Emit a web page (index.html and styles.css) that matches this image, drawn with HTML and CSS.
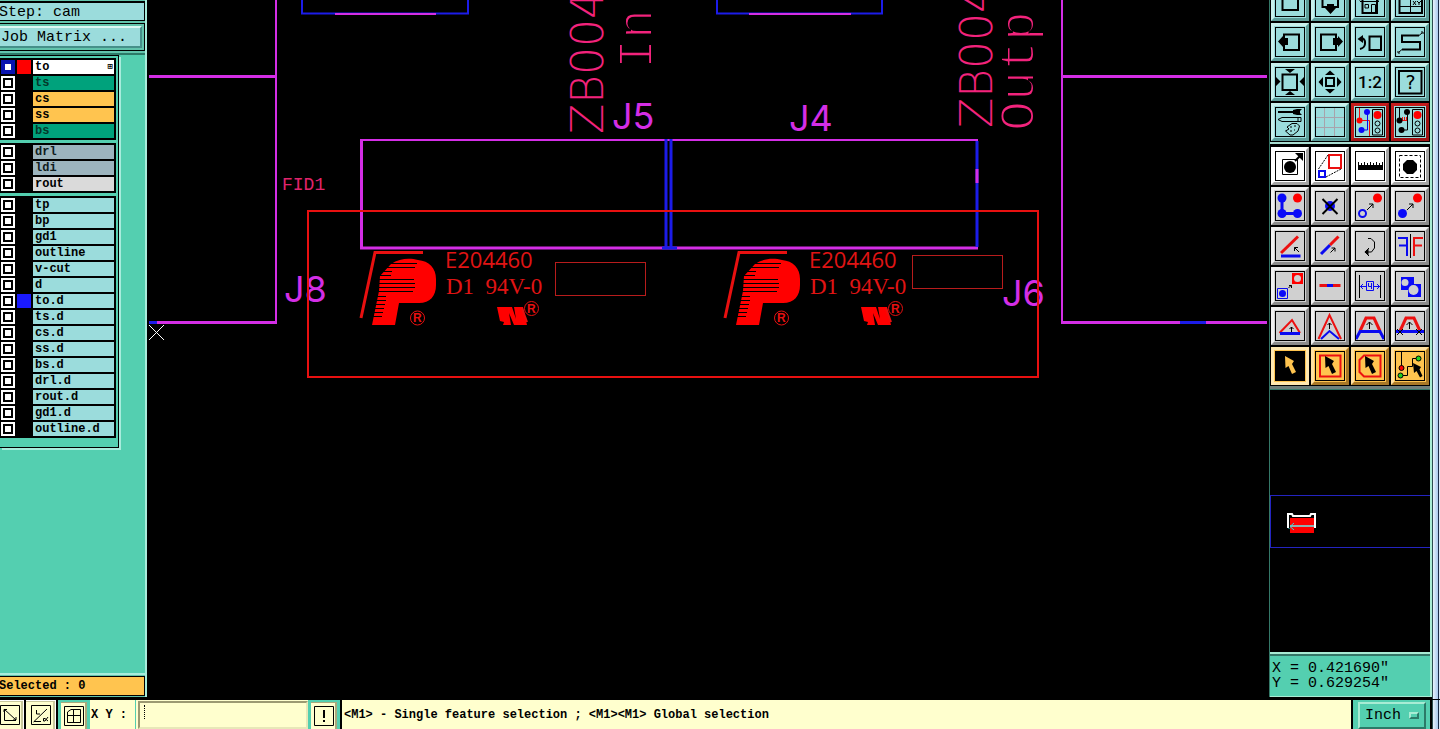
FILE: index.html
```html
<!DOCTYPE html>
<html lang="en">
<head>
<meta charset="utf-8">
<title>Graphic Editor</title>
<link rel="stylesheet" href="styles.css">
</head>
<body>
<div class="app">
<div class="work">
<aside class="side">
  <div class="job">
    <div class="step">Step: cam</div>
    <div class="matrix-frame"><button class="matrix" type="button">Job Matrix ...</button></div>
  </div>
  <div class="layers">
    <div class="group">
      <label class="layer white on"><input type="checkbox"><i class="swatch red"></i><span>to</span><b class="mark">⊞</b></label>
      <label class="layer green"><input type="checkbox"><i class="swatch"></i><span>ts</span></label>
      <label class="layer orange"><input type="checkbox"><i class="swatch"></i><span>cs</span></label>
      <label class="layer orange"><input type="checkbox"><i class="swatch"></i><span>ss</span></label>
      <label class="layer green"><input type="checkbox"><i class="swatch"></i><span>bs</span></label>
    </div>
    <div class="group">
      <label class="layer slate"><input type="checkbox"><i class="swatch"></i><span>drl</span></label>
      <label class="layer slate"><input type="checkbox"><i class="swatch"></i><span>ldi</span></label>
      <label class="layer grey"><input type="checkbox"><i class="swatch"></i><span>rout</span></label>
    </div>
    <div class="group">
      <label class="layer"><input type="checkbox"><i class="swatch"></i><span>tp</span></label>
      <label class="layer"><input type="checkbox"><i class="swatch"></i><span>bp</span></label>
      <label class="layer"><input type="checkbox"><i class="swatch"></i><span>gd1</span></label>
      <label class="layer"><input type="checkbox"><i class="swatch"></i><span>outline</span></label>
      <label class="layer"><input type="checkbox"><i class="swatch"></i><span>v-cut</span></label>
      <label class="layer"><input type="checkbox"><i class="swatch"></i><span>d</span></label>
      <label class="layer"><input type="checkbox"><i class="swatch blue"></i><span>to.d</span></label>
      <label class="layer"><input type="checkbox"><i class="swatch"></i><span>ts.d</span></label>
      <label class="layer"><input type="checkbox"><i class="swatch"></i><span>cs.d</span></label>
      <label class="layer"><input type="checkbox"><i class="swatch"></i><span>ss.d</span></label>
      <label class="layer"><input type="checkbox"><i class="swatch"></i><span>bs.d</span></label>
      <label class="layer"><input type="checkbox"><i class="swatch"></i><span>drl.d</span></label>
      <label class="layer"><input type="checkbox"><i class="swatch"></i><span>rout.d</span></label>
      <label class="layer"><input type="checkbox"><i class="swatch"></i><span>gd1.d</span></label>
      <label class="layer"><input type="checkbox"><i class="swatch"></i><span>outline.d</span></label>
    </div>
  </div>
  <div class="selected-frame"><div class="selected">Selected : 0</div></div>
</aside>

<main class="canvas">
<svg class="board" viewBox="147 0 1122 699" preserveAspectRatio="xMinYMin slice">
  <defs>
    <g id="mark">
      <path class="r-line3" d="M361 318L375 252.500H423"/>
      <path class="r-fill" d="M372 325L379 291L380 276L391 264C400 258 410 258 418 260C429 261 436 268 436 279V285C436 296 430 303 419 303H399L395 325Z"/>
      <path class="cut" d="M390 263.500H417M386 267.500H415M380 271.500H392M378 275.500H391M376 279.500H414M376 283.500H415M376 287.500H415M376 291.500H413M376 296.500H386M376 300.500H386M372 304.500H385M372 308.500H384M370 312.500H383M370 316.500H382"/>
      <circle class="r-line" cx="417.500" cy="318" r="7"/>
      <text class="reg" x="413" y="322">R</text>
      <path class="r-fill" d="M497 307H512L516 319L514 307H522L524 313L525 319L520 307H523L527 325H514L509 313L511 325H503L504 322L500 321Z"/>
      <path class="r-line2" d="M522 308L527 322"/>
      <circle class="r-line" cx="531.500" cy="308.500" r="7"/>
      <text class="reg" x="527" y="313">R</text>
      <text class="ul" x="445" y="268">E204460</text>
      <text class="ul-serif" x="446" y="294" xml:space="preserve">D1  94V-0</text>
    </g>
  </defs>
  <g class="m3"><path d="M149 76.500H276M149 322.500H276M1062 76.500H1267M1062 322.500H1267M361.500 139V249M360 248H978"/></g>
  <g class="m2"><path d="M276 0V324M1062 0V324M361 140H978"/></g>
  <g class="b2"><path d="M302 0V14M468 0V14M301 13.500H469M717 0V14M882 0V14M716 13.500H883"/></g>
  <g class="b3"><path d="M149 322.500H157M1180 322.500H1206M666 139V249M671 139V249M662 248H677M977 141V247"/></g>
  <path class="m2" d="M335 14H436M749 14H851"/>
  <path class="m3" d="M977 169V183"/>
  <path class="gap" d="M668.500 142V246"/>
  <path class="cross" d="M149 325L164 340M164 325L149 340"/>

  <text class="thin" transform="translate(603 134) rotate(-90)">ZB004</text>
  <text class="mono" transform="translate(652 69) rotate(-90)">In</text>
  <text class="thin" transform="translate(992 128) rotate(-90)">ZB004</text>
  <text class="mono" transform="translate(1034 131) rotate(-90)">Outp</text>
  <text class="fid" x="282" y="190">FID1</text>
  <text class="ref" x="612" y="129">J5</text>
  <text class="ref" x="789" y="131">J4</text>
  <text class="ref" x="284" y="302">J8</text>
  <text class="ref" x="1002" y="306">J6</text>

  <use href="#mark"/>
  <use href="#mark" x="364"/>
  <rect class="r-thin" x="555.500" y="262.500" width="90" height="33"/>
  <rect class="r-thin" x="912.500" y="255.500" width="90" height="33"/>
  <rect class="r-line2" x="308" y="211" width="730" height="166"/>
</svg>
</main>

<aside class="tools">
  <div class="palette view">
    <button type="button" class="t" aria-label="Zoom window"><svg viewBox="0 0 30 30"><path class="k2" d="M7.500 7H23V23H7.500Z"/></svg></button>
    <button type="button" class="t" aria-label="Pan down"><svg viewBox="0 0 30 30"><path class="k2" d="M7.500 5H23V20H7.500Z"/><path d="M12 17H19V21H21L15.500 27L10 21H12Z"/></svg></button>
    <button type="button" class="t" aria-label="Home"><svg viewBox="0 0 30 30"><path class="k2" d="M4 13L14 5L24 13M7.500 13V26H22V13"/><path class="k1" d="M5 14.500H24M10 17.500H13.500V21H10ZM16.500 26V17.500H20.500V26"/></svg></button>
    <button type="button" class="t" aria-label="XY view"><svg viewBox="0 0 30 30"><path class="k2" d="M4.500 4H27V26H4.500Z"/><path class="k1" d="M5 19.500H26M15.500 4V26M18 14L21 18M21 14L18 18M22 14L24 16L26 14M24 16V18"/></svg></button>

    <button type="button" class="t" aria-label="Pan left"><svg viewBox="0 0 30 30"><path class="k2" d="M9 7.500H24V23H9Z"/><path d="M3 14.500L8 9V11H13V18H8V20Z"/></svg></button>
    <button type="button" class="t" aria-label="Pan right"><svg viewBox="0 0 30 30"><path class="k2" d="M6 7.500H21V23H6Z"/><path d="M28 14.500L23 9V11H18V18H23V20Z"/></svg></button>
    <button type="button" class="t" aria-label="Previous view"><svg viewBox="0 0 30 30"><path class="k2" d="M14.500 9.500H26V23H14.500ZM5 11.500H8Q10.500 13 10 17T5 22"/><path d="M2.500 12L8 8V16Z"/></svg></button>
    <button type="button" class="t" aria-label="Serpentine"><svg viewBox="0 0 30 30"><path class="k2" d="M24 8.500H7V15H25V22.500H7"/><path class="k1" d="M24 8.500L27 6M27 6V4M27 6H29M7 22.500L4 25M4 25V27M4 25H2"/></svg></button>

    <button type="button" class="t" aria-label="Zoom out"><svg viewBox="0 0 30 30"><path class="k2" d="M7.500 7.500H22V23H7.500Z"/><path d="M10 2H20L15 6ZM10 28H20L15 24ZM1 10V19L5.500 14.500ZM29 10V19L24.500 14.500Z"/></svg></button>
    <button type="button" class="t" aria-label="Zoom in"><svg viewBox="0 0 30 30"><path class="k2" d="M11 11H19V19H11Z"/><path d="M10 8H20L15 3.500ZM10 22H20L15 26.500ZM8 10V20L3.500 15ZM22 10V20L26.500 15Z"/></svg></button>
    <button type="button" class="t" aria-label="Scale one to two"><svg viewBox="0 0 30 30"><text class="scale" x="15" y="21">1:2</text></svg></button>
    <button type="button" class="t" aria-label="Help"><svg viewBox="0 0 30 30"><path class="k2" d="M4 4H26.500V26.500H4Z"/><text class="help" x="15.500" y="22">?</text></svg></button>

    <button type="button" class="t" aria-label="Setup"><svg viewBox="0 0 30 30"><path d="M3 4H18V3L22 2H27L25 4V6L27 8H22L18 7V6H3Z"/><path class="k1" d="M3 12.500L7 10.500H26V14.500H7ZM23 10V15M12 20L17 16.500H22L24.500 19L23 24L18 28H15L10.500 24L14 22Z"/><path class="k1" d="M15 20H17M19 19H21M15 24H17M19 23H20"/></svg></button>
    <button type="button" class="t" aria-label="Grid"><svg viewBox="0 0 30 30"><path class="gridline" d="M9.500 1V29M19.500 1V29M1 10.500H29M1 20.500H29"/></svg></button>
    <button type="button" class="t alert" aria-label="Net check"><svg viewBox="0 0 30 30"><path class="r1" d="M4.500 1V13.500H14.500V29"/><path class="bl1" d="M12.500 5V23H6.500"/><circle class="bf" cx="12" cy="5" r="3"/><circle class="rf" cx="4.500" cy="13.500" r="3"/><circle class="bf" cx="6.500" cy="23" r="3"/><path class="k1" d="M17.500 2.500H27.500V28H17.500Z"/><circle class="rf" cx="22.500" cy="8" r="4"/><circle class="k1" cx="22.500" cy="16.500" r="2.500"/><circle class="k1" cx="22.500" cy="23.500" r="2.500"/></svg></button>
    <button type="button" class="t alert" aria-label="Spacing check"><svg viewBox="0 0 30 30"><path class="k1" d="M4.500 1V13.500M12.500 5V23H6.500"/><path class="r1" d="M5 13.500H12M7.500 10V13M9.500 10V13M11.500 10V13"/><circle cx="12" cy="5" r="3"/><circle cx="4.500" cy="13.500" r="3"/><circle cx="6.500" cy="23" r="3"/><path class="k1" d="M17.500 2.500H27.500V28H17.500Z"/><circle class="rf" cx="22.500" cy="8" r="4"/><circle class="k1" cx="22.500" cy="16.500" r="2.500"/><circle class="k1" cx="22.500" cy="23.500" r="2.500"/></svg></button>
  </div>

  <div class="palette edit">
    <button type="button" class="t w" aria-label="Pad properties"><svg viewBox="0 0 30 30"><path class="k1" d="M7.500 8.500H22.500V23.500H7.500Z"/><circle cx="15" cy="16" r="6"/><path class="k2" d="M20 10L26 4"/><path d="M20 2H28V10Z"/></svg></button>
    <button type="button" class="t w" aria-label="Resize"><svg viewBox="0 0 30 30"><path class="k2 red" d="M14 4H26V17H14Z"/><path class="k2 blue" d="M4 20H10V26H4Z"/><path class="k1 dots" d="M3.500 18L13 4M11 26L26 18"/></svg></button>
    <button type="button" class="t w" aria-label="Measure"><svg viewBox="0 0 30 30"><path d="M3 14H28V19H3Z"/><path class="k1" d="M3.500 11V15M6.500 12V15M9.500 11V15M12.500 12V15M15.500 11V15M18.500 12V15M21.500 11V15M24.500 12V15M27.500 11V15"/></svg></button>
    <button type="button" class="t w" aria-label="Select area"><svg viewBox="0 0 30 30"><path class="k1 dash" d="M4.500 4.500H25.500V26.500H4.500Z"/><path d="M12 9H18L22 13V19L18 23H12L8 19V13Z"/></svg></button>

    <button type="button" class="t g" aria-label="Copy chain"><svg viewBox="0 0 30 30"><path class="bl2" d="M7 7V22.500H22.500"/><circle class="bf" cx="7" cy="7" r="4.500"/><circle class="bf" cx="7" cy="22.500" r="4.500"/><circle class="bf" cx="22.500" cy="22.500" r="4.500"/><circle class="rf" cx="22.500" cy="7" r="4.500"/></svg></button>
    <button type="button" class="t g" aria-label="Delete"><svg viewBox="0 0 30 30"><circle class="bf" cx="15" cy="15" r="5"/><path class="k2" d="M7.500 8L22.500 23M22.500 8L7.500 23"/></svg></button>
    <button type="button" class="t g" aria-label="Move"><svg viewBox="0 0 30 30"><circle class="k2 blue" cx="7.500" cy="22.500" r="3.500"/><circle class="rf" cx="22.500" cy="7" r="4.500"/><path class="k1" d="M12 19L18 13M14 13H18V17"/></svg></button>
    <button type="button" class="t g" aria-label="Copy"><svg viewBox="0 0 30 30"><circle class="bf" cx="7.500" cy="22.500" r="4.500"/><circle class="rf" cx="22.500" cy="7" r="4.500"/><path class="k1" d="M12 19L18 13M14 13H18V17"/></svg></button>

    <button type="button" class="t g" aria-label="Change angle"><svg viewBox="0 0 30 30"><path class="r2" d="M6 22L23 5.500"/><path class="bl2" d="M6 25H25.500"/><path class="k1" d="M24 21L19.500 16.500M19.500 20V16.500H23"/></svg></button>
    <button type="button" class="t g" aria-label="Extend line"><svg viewBox="0 0 30 30"><path class="bl2" d="M6 23L15 14"/><path class="r2" d="M15 14L23.500 5.500"/><path class="k1" d="M15.500 21.500L20 17M16.500 17H20V20.500"/></svg></button>
    <button type="button" class="t g" aria-label="Rotate"><svg viewBox="0 0 30 30"><path class="k1" d="M13 7.500H16L19.500 11V17L16.500 21H10M14 17L10 21L14 25"/><path d="M9.500 21L13.500 17.500V24.500Z"/></svg></button>
    <button type="button" class="t g" aria-label="Mirror"><svg viewBox="0 0 30 30"><path class="k2 blue" d="M3 7H12V25M4 14.500H12"/><path class="k2 red" d="M28 7H19V25M19 14.500H27"/><path class="k1" d="M15.500 3V27"/></svg></button>

    <button type="button" class="t g" aria-label="Replace"><svg viewBox="0 0 30 30"><path class="rf" d="M17 2H28V13H17Z"/><circle class="gf" cx="22.500" cy="7.500" r="3.500"/><path class="bl1" d="M2.500 17.500H12.500V27.500H2.500Z"/><circle class="bf" cx="7.500" cy="22.500" r="3.500"/><path class="k1" d="M13.500 17L16.500 14M14 14.500H16.500V17"/></svg></button>
    <button type="button" class="t g" aria-label="Merge line"><svg viewBox="0 0 30 30"><path class="r2" d="M4.500 14.500H25.500"/><path class="bl2" d="M12 14.500H18"/></svg></button>
    <button type="button" class="t g" aria-label="Spacing"><svg viewBox="0 0 30 30"><path class="k1" d="M4.500 4V27M25.500 4V27"/><path class="bl1" d="M11.500 10.500H18.500V19.500H11.500ZM13.500 12V15.500H17M16.500 12V18M5 15.500H11M8 13L5.500 15.500L8 18M19 15.500H25M22 13L24.500 15.500L22 18"/></svg></button>
    <button type="button" class="t g" aria-label="Surface merge"><svg viewBox="0 0 30 30"><path class="bf" d="M6 6H19V13H26V26H13V19H6Z"/><circle class="gf" cx="10" cy="11.500" r="3.500"/><circle class="gf" cx="18.500" cy="19" r="5"/></svg></button>

    <button type="button" class="t g" aria-label="Move corner"><svg viewBox="0 0 30 30"><path class="k2 red" d="M4.500 22L17 9L25 22"/><path class="bl2" d="M5 22.500H25"/><path class="k1" d="M16.500 21V16M14.500 18L16.500 16L18.500 18"/></svg></button>
    <button type="button" class="t g" aria-label="Stretch corner"><svg viewBox="0 0 30 30"><path class="k2 red" d="M3.500 28L14.500 4L26 28"/><path class="k2 blue" d="M6 28L14.500 20L24 28"/><path class="k1" d="M14.500 18V12M12.500 14L14.500 12L16.500 14"/></svg></button>
    <button type="button" class="t g" aria-label="Stretch side"><svg viewBox="0 0 30 30"><path class="r2" d="M5 20L11 7H19L25 20"/><path class="bl2" d="M1 28L5 20.500H25L29 28"/><path class="k1" d="M14.500 18V11M11.500 14L14.500 11L17.500 14"/></svg></button>
    <button type="button" class="t g" aria-label="Cut side"><svg viewBox="0 0 30 30"><path class="r2" d="M5 20L11 7H19L25 20"/><path class="bl2" d="M0 20.500H30"/><path class="k1" d="M14.500 18V11M11.500 14L14.500 11L17.500 14M2 18L8 24M8 18L2 24M21 18L27 24M27 18L21 24"/></svg></button>

    <button type="button" class="t o pressed" aria-label="Select"><svg viewBox="0 0 30 30"><path d="M0 0H30V30H0Z"/><path class="of" d="M10 5L19 10L17 13L21 21L17 23L13.500 15L10.500 17Z"/></svg></button>
    <button type="button" class="t o" aria-label="Select in frame"><svg viewBox="0 0 30 30"><path class="k2 red" d="M5 4.500H25.500V25.500H5Z"/><path d="M10 5L19 10L17 13L21 21L17 23L13.500 15L10.500 17Z"/></svg></button>
    <button type="button" class="t o" aria-label="Select in polygon"><svg viewBox="0 0 30 30"><path class="k2 red" d="M9 4.500H25.500V25.500H9L4.500 21V9Z"/><path d="M10 5L19 10L17 13L21 21L17 23L13.500 15L10.500 17Z"/></svg></button>
    <button type="button" class="t o" aria-label="Select net"><svg viewBox="0 0 30 30"><path class="k1" d="M6.500 1V16M6 24.500H12.500V15.500H17.500V7.500H23"/><circle class="dot rf" cx="6.500" cy="17" r="2.500"/><circle class="dot lime" cx="5.500" cy="24.500" r="2.500"/><circle class="dot lime" cx="23.500" cy="7.500" r="2.500"/><path d="M18 12L26 16L24.500 18.500L27.500 25L25 26.500L21.500 20L19 22Z"/></svg></button>
  </div>

  <div class="overview">
    <div class="extent">
      <svg class="mini" viewBox="0 0 30 22"><path class="rf" d="M3 6H27V21H3Z"/><path class="wl" d="M1 16V2H5L6 4H23L24 2H28V16"/><path class="cy" d="M3 14H27"/><path class="cz" d="M7 11L3 14.500L7 18M2 17V16"/></svg>
    </div>
  </div>
  <div class="coords">X = 0.421690"<br>Y = 0.629254"</div>
</aside>
<div class="edge"></div>
</div>

<footer class="status">
  <button type="button" class="s" aria-label="Diagonal mode"><svg viewBox="0 0 20 20"><path class="k1" d="M.5 .5H19.500V19.500H.5ZM4.500 4V15.500H16M4 4L16 15M4 7V4.500H7M16 12V15H13"/></svg></button>
  <button type="button" class="s" aria-label="Angle mode"><svg viewBox="0 0 20 20"><path class="k1" d="M.5 .5H19.500V19.500H.5ZM2.500 17L16 4M5.500 5V9H9M3 16.500H10"/><path class="k1" d="M17 12L14 16H12.500V13.500H14L17 16"/></svg></button>
  <button type="button" class="s active" aria-label="Snap grid"><svg viewBox="0 0 20 20"><path class="k1" d="M.5 .5H19.500V19.500H.5ZM3.500 16.500V6L7 3.500H16.500V16.500ZM9.500 3.500V16.500M3.500 9.500H16.500M3.500 16.500H16.500"/></svg></button>
  <label class="xy" for="xy">X Y :</label>
  <div class="field-frame"><input id="xy" class="field" type="text"><i class="caret"></i></div>
  <button type="button" class="s active" aria-label="Messages"><svg viewBox="0 0 20 20"><path class="k1" d="M.5 .5H19.500V19.500H.5Z"/><path d="M9 4H11V12H9ZM9 14H11V16H9Z"/></svg></button>
  <output class="msg">&lt;M1&gt; - Single feature selection ; &lt;M1&gt;&lt;M1&gt; Global selection</output>
  <div class="unit-frame"><button type="button" class="unit">Inch<i></i></button></div>
  <div class="edge"></div>
</footer>
</div>
</body>
</html>
```
FILE: styles.css
```css
* { box-sizing: border-box; }
body {
  margin: 0;
  background: #000;
  color: #000;
  font-family: "Liberation Mono", monospace;
  font-size: 15px;
}
button { font: inherit; color: inherit; margin: 0; }
.app { display: flex; flex-direction: column; min-height: 100vh; }
.work { display: flex; flex: 1; }

/* left side */
.side {
  width: 147px;
  flex: none;
  display: flex;
  flex-direction: column;
  background: #54cfb0;
  border-right: 2px solid #a8ecdc;
  margin-bottom: 2px;
}
.job { padding-top: 1px; border-bottom: 2px solid #2c7a68; background: #62c4ac; }
.step {
  height: 20px;
  line-height: 19px;
  background: #9bdcdc;
  border: 1px solid #000;
  border-top-width: 2px;
  border-left: 0;
  text-indent: -1px;
}
.matrix-frame { margin: 2px 0; padding: 2px 2px 2px 0; border: 1px solid #000; border-left: 0; }
.matrix {
  display: block;
  width: 100%;
  height: 22px;
  padding: 0 0 0 1px;
  text-align: left;
  line-height: 20px;
  background: #9bdcdc;
  border: 2px solid;
  border-color: #dcf8f4 #46908a #46908a #9bdcdc;
  border-left-width: 0;
}
.layers {
  margin-right: 26px;
  padding: 2px 2px 9px 0;
  border: 1px solid #000;
  border-left: 0;
  box-shadow: 2px 2px 0 #a8ecdc;
  display: flex;
  flex-direction: column;
  gap: 3px;
}
.group {
  display: flex;
  flex-direction: column;
  gap: 2px;
  background: #000;
  padding: 2px 2px 2px 1px;
}
.layer {
  display: grid;
  grid-template-columns: 14px 14px 1fr;
  column-gap: 2px;
  height: 14px;
  font-size: 12px;
  font-weight: 700;
  line-height: 14px;
}
.layer input {
  appearance: none;
  width: 14px;
  height: 14px;
  margin: 0;
  background: #fff;
  border: 2px solid #fff;
  box-shadow: inset 0 0 0 2px #000;
}
.layer.on input { border-color: #0a14b0; box-shadow: inset 0 0 0 2px #0a14b0; }
.layer span { grid-area: 1 / 3; background: #9bdcdc; padding-left: 2px; }
.layer.white span { background: #fff; }
.layer.green span { background: #00a27c; color: #04382a; }
.layer.orange span { background: #ffc44f; }
.layer.slate span { background: #9cb4be; color: #101c1c; }
.layer.grey span { background: #dadada; }
.layer .mark { grid-area: 1 / 3; justify-self: end; font-size: 9px; padding-right: 1px; }
.swatch.red { background: #f00; }
.swatch.blue { background: #1a1aff; }
.selected-frame {
  margin-top: auto;
  padding: 1px 0;
  border-top: 2px solid #a8ecdc;
  background: #62c4ac;
}
.selected {
  height: 20px;
  border: 1px solid #000;
  border-left: 0;
  background: #ffc44f;
  font-size: 12px;
  font-weight: 700;
  line-height: 18px;
  text-indent: -1px;
}

/* board view */
.canvas { flex: 1; min-width: 0; background: #000; }
.board { display: block; width: 100%; height: 100%; }
.board path, .board rect, .board circle { fill: none; }
.m3, .m2 { stroke: #d42ee6; stroke-width: 3; }
.m2 { stroke-width: 2; }
.b3, .b2 { stroke: #1c1ce8; stroke-width: 3; }
.b2 { stroke-width: 2; }
.gap { stroke: #000; stroke-width: 1; }
.cross { stroke: #fff; stroke-width: 1; }
.r-line, .r-line2, .r-line3, .r-thin { stroke: #e81010; stroke-width: 1; }
.r-thin { stroke: #b81c1c; }
.r-line2 { stroke-width: 2; }
.r-line3 { stroke-width: 3; }
.board .r-fill { fill: #f00; }
.cut { stroke: #000; stroke-width: 1; }
.thin { font: 200 44px "DejaVu Sans", sans-serif; fill: #f2237c; }
.mono { font: 50px "Liberation Mono", monospace; fill: #f2237c; stroke: #000; stroke-width: 2; }
.fid { font: 18px "Liberation Mono", monospace; fill: #e0246c; }
.ref { font: 36px Inter, sans-serif; fill: #d42ee6; }
.ul { font: 22px "Open Sans", sans-serif; fill: #e01414; }
.ul-serif { font: 23px "Liberation Serif", serif; fill: #e01414; }
.reg { font: 700 12px "Liberation Sans", sans-serif; fill: #e81010; }

/* right side */
.tools {
  width: 163px;
  flex: none;
  display: flex;
  flex-direction: column;
  margin-bottom: 2px;
  border-left: 1px solid #347868;
  border-right: 2px solid #a8ecd4;
}
.palette {
  display: grid;
  grid-template-columns: repeat(4, 38px);
  gap: 2px;
  padding: 0 0 1px 1px;
  background: #000;
}
.view { margin-top: -17px; border-bottom: 2px solid #a8dcd0; }
.edit { padding: 3px 0 1px 1px; border-bottom: 3px solid #70807c; }
.t {
  width: 38px;
  height: 38px;
  padding: 1px;
  background: #9bdcdc;
  border: 3px solid;
  border-color: #c8f0ec #5c9c98 #5c9c98 #c8f0ec;
}
.t svg { display: block; width: 30px; height: 30px; outline: 1px solid #000; outline-offset: -1px; }
.t.alert { border-color: #c41c1c #a01414 #a01414 #c41c1c; }
.t.alert svg { background: #9bdcdc; }
.t.w { background: #fff; border-color: #fff #a4a4a4 #a4a4a4 #fff; }
.t.g { background: #d0d0d0; border-color: #f0f0f0 #8c8c8c #8c8c8c #f0f0f0; }
.t.o { background: #ffc44f; border-color: #ffe0a0 #a87828 #a87828 #ffe0a0; }
.t.pressed { border-color: #ffe8b0; }
.k1, .k2, .r1, .r2, .bl1, .bl2 { fill: none; stroke: #000; stroke-width: 1; }
.k2 { stroke-width: 2; }
.r2, .bl2 { stroke-width: 3; }
.r1, .r2, .k2.red { stroke: #ec1010; }
.bl1, .bl2, .k2.blue { stroke: #0a0af0; }
.dot { stroke: #000; stroke-width: 1; }
.rf { fill: #f00; }
.bf { fill: #0a0af8; }
.gf { fill: #d0d0d0; }
.of { fill: #ffc44f; }
.lime { fill: #20d020; }
.gridline { fill: none; stroke: #a8a4ac; stroke-width: 1; }
.dots { stroke-dasharray: 2 1; }
.dash { stroke-dasharray: 3 2; }
.scale { font: 500 17px Roboto, sans-serif; text-anchor: middle; }
.help { font: 19px "DejaVu Sans", sans-serif; text-anchor: middle; }
.overview {
  flex: 1;
  display: flex;
  align-items: center;
  border: solid;
  border-width: 1px 0 2px;
  border-color: #347868 #000 #a8ecd4;
}
.extent { width: 100%; height: 53px; border: 1px solid #2424c0; border-right: 0; padding: 16px; }
.mini { display: block; width: 30px; height: 22px; }
.wl { fill: none; stroke: #fff; stroke-width: 2; }
.cy { stroke: #8cb0b0; stroke-width: 2; }
.cz { fill: none; stroke: #38d8d8; stroke-width: 1; }
.coords {
  height: 43px;
  padding: 5px 2px;
  background: #54cfb0;
  border-top: 2px solid #347868;
  border-bottom: 1px solid #a8ecd4;
  line-height: 15px;
}
.edge {
  width: 8px;
  flex: none;
  background: linear-gradient(90deg, #2c4c50 1px, #e8f2fc 1px, #a8c8ec 6px, #1c2c48 6px, #1c2c48 7px, #dce8f4 7px);
}

/* status bar */
.status { display: flex; height: 30px; background: #ffffce; border-top: 1px solid #000; }
.status .s {
  width: 32px;
  flex: none;
  padding: 0 2px;
  background: #ffffce;
  border: 0 solid #000;
  border-right-width: 2px;
  box-shadow: inset -1px 1px 0 #fff, inset -3px 2px 0 #c8c89c;
}
.status .s:first-child { width: 26px; padding: 0 4px 0 0; }
.s svg { display: block; width: 20px; height: 20px; margin: 0 auto; }
.status .s.active {
  border: solid #54cfb0;
  border-width: 2px 3px 0;
  padding: 0 1px;
  box-shadow: inset -2px 1px 0 #a8a87c;
}
.xy { width: 46px; padding-left: 1px; font-size: 12px; font-weight: 700; line-height: 31px; border-right: 1px solid #54cfb0; white-space: nowrap; }
.field-frame { display: flex; position: relative; padding: 1px 0 0 2px; }
.field {
  width: 170px;
  margin: 0;
  padding: 0 6px;
  background: #ffffce;
  border: 2px solid;
  border-color: #9c9a72 #e8e8b8 #e8e8b8 #9c9a72;
  font: 12px "Liberation Mono", monospace;
}
.caret { position: absolute; left: 8px; top: 5px; height: 14px; border-left: 1px dotted #000; }
.msg { flex: 1; padding-left: 2px; font-size: 12px; font-weight: 700; line-height: 31px; border-left: 2px solid #000; border-right: 2px solid #000; }
.unit-frame { width: 79px; padding: 2px 4px 0 5px; background: #54cfb0; border-right: 2px solid #000; }
.unit {
  width: 100%;
  height: 27px;
  display: flex;
  align-items: center;
  gap: 8px;
  padding: 0 5px;
  background: #54cfb0;
  border: 2px solid;
  border-color: #a8ecd4 #2c7a68 #2c7a68 #a8ecd4;
}
.unit i { width: 12px; height: 7px; border: 2px solid; border-color: #a8ecd4 #2c7a68 #2c7a68 #a8ecd4; }
```
